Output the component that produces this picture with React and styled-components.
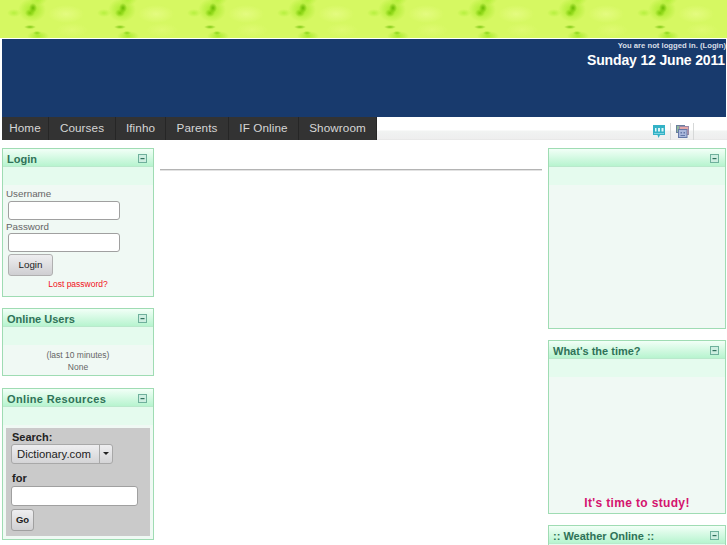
import React from "react";
import styled, { createGlobalStyle } from "styled-components";

const GlobalStyle = createGlobalStyle`
    html, body {
        margin: 0;
        height: 545px;
        overflow: hidden;
        background: #fff;
        font-family: "Liberation Sans", Arial, sans-serif;
    }
`;

const NAV_ITEMS = [
    { label: "Home", width: 47 },
    { label: "Courses", width: 67 },
    { label: "Ifinho", width: 50 },
    { label: "Parents", width: 63 },
    { label: "IF Online", width: 70 },
    { label: "Showroom", width: 78 },
];

function Minus() {
    return (
        <svg width="9" height="9" viewBox="0 0 9 9">
            <rect x="0.5" y="0.5" width="8" height="8" fill="#cdeee0" stroke="#6fb09c" />
            <rect x="2.5" y="4" width="4" height="1.2" fill="#2f6f5c" />
        </svg>
    );
}

function HelpIcon() {
    return (
        <svg width="12" height="13" viewBox="0 0 12 13">
            <path d="M0 0h12v10H7l-1.500 3-1-3H0z" fill="#33b2c6" />
            <rect x="2" y="3" width="1.500" height="3.500" fill="#dff6f8" />
            <rect x="5" y="3" width="2" height="3.500" fill="#dff6f8" />
            <rect x="8.500" y="3" width="2" height="3.500" fill="#dff6f8" />
            <rect x="1" y="8" width="10" height="0.800" fill="#8fdbe6" />
        </svg>
    );
}

function WindowsIcon() {
    return (
        <svg width="13" height="13" viewBox="0 0 13 13">
            <rect x="0.500" y="0.500" width="8" height="7" fill="#8fb89a" stroke="#6b7f9f" />
            <rect x="3.500" y="1.500" width="9" height="8" fill="#e5a7a7" stroke="#9a8aa8" />
            <rect x="2.500" y="4.500" width="8.500" height="8" fill="#aab8dc" stroke="#6478a8" />
            <rect x="4.500" y="7" width="1.500" height="1.500" fill="#6478a8" />
            <rect x="7.500" y="7" width="1.500" height="1.500" fill="#6478a8" />
            <rect x="4.500" y="10" width="4.500" height="1" fill="#6478a8" />
        </svg>
    );
}

function Panel({ title, bodyHeight, spacing, spaceAfter, children }) {
    return (
        <PanelBox $spaceAfter={spaceAfter}>
            <PanelHead>
                <PanelTitle $spacing={spacing}>{title}</PanelTitle>
                <Minus />
            </PanelHead>
            <PanelStrip />
            <PanelBody $height={bodyHeight}>{children}</PanelBody>
        </PanelBox>
    );
}

export default function App() {
    return (
        <Page>
            <GlobalStyle />
            <Banner />
            <Header>
                <LoginNote>You are not logged in. (Login)</LoginNote>
                <DateLine>Sunday 12 June 2011</DateLine>
            </Header>
            <NavBar>
                <NavList>
                    {NAV_ITEMS.map((item) => (
                        <NavItem key={item.label} $width={item.width}>
                            {item.label}
                        </NavItem>
                    ))}
                </NavList>
                <Tools>
                    <ToolCell>
                        <HelpIcon />
                    </ToolCell>
                    <ToolCell>
                        <WindowsIcon />
                    </ToolCell>
                </Tools>
            </NavBar>
            <Columns>
                <LeftColumn>
                    <Panel title="Login" bodyHeight={111}>
                        <LoginForm>
                            <FieldLabel>Username</FieldLabel>
                            <LoginInput $width={112} />
                            <FieldLabel>Password</FieldLabel>
                            <LoginInput $width={112} />
                            <LoginButton>Login</LoginButton>
                            <LostLink>Lost password?</LostLink>
                        </LoginForm>
                    </Panel>
                    <Panel title="Online Users" bodyHeight={30} spaceAfter={1}>
                        <UsersNote>
                            (last 10 minutes)
                            <br />
                            None
                        </UsersNote>
                    </Panel>
                    <Panel title="Online Resources" bodyHeight={114} spacing={0.35}>
                        <SearchBox>
                            <SearchLabel>Search:</SearchLabel>
                            <SelectBox>
                                <SelectText>Dictionary.com</SelectText>
                                <SelectCaret />
                            </SelectBox>
                            <ForLabel>for</ForLabel>
                            <SearchInput $width={127} />
                            <GoButton>Go</GoButton>
                        </SearchBox>
                    </Panel>
                </LeftColumn>
                <Middle>
                    <Rule />
                </Middle>
                <RightColumn>
                    <Panel title="" bodyHeight={143} />
                    <Panel title="What's the time?" bodyHeight={136}>
                        <StudyNote>It's time to study!</StudyNote>
                    </Panel>
                    <Panel title=":: Weather Online ::" bodyHeight={40} />
                </RightColumn>
            </Columns>
        </Page>
    );
}

const Page = styled.div`
    width: 727px;
    height: 545px;
    overflow: hidden;
`;

// one tile of the leaf texture, repeated every 90px
const Banner = styled.div`
    height: 38px;
    background-color: #d6f862;
    background-image:
        radial-gradient(ellipse 4px 5px at 33px 8px, rgba(105, 185, 0, 0.95) 0%, rgba(105, 185, 0, 0) 100%),
        radial-gradient(ellipse 5px 4px at 30px 13px, rgba(120, 200, 5, 0.9) 0%, rgba(120, 200, 5, 0) 100%),
        radial-gradient(ellipse 6px 2px at 30px 27px, rgba(115, 195, 10, 0.9) 0%, rgba(115, 195, 10, 0) 100%),
        radial-gradient(ellipse 4px 2px at 37px 33px, rgba(125, 210, 15, 0.85) 0%, rgba(125, 210, 15, 0) 100%),
        radial-gradient(ellipse 14px 12px at 32px 10px, rgba(160, 232, 35, 0.9) 0%, rgba(160, 232, 35, 0) 100%),
        radial-gradient(ellipse 7px 4px at 14px 13px, rgba(165, 235, 45, 0.65) 0%, rgba(165, 235, 45, 0) 100%),
        radial-gradient(ellipse 11px 5px at 38px 36px, rgba(160, 232, 35, 0.8) 0%, rgba(160, 232, 35, 0) 100%),
        radial-gradient(ellipse 9px 5px at 38px 0, rgba(170, 238, 45, 0.75) 0%, rgba(170, 238, 45, 0) 100%),
        radial-gradient(ellipse 18px 9px at 66px 14px, rgba(232, 252, 135, 0.8) 0%, rgba(232, 252, 135, 0) 100%),
        radial-gradient(ellipse 16px 7px at 72px 30px, rgba(226, 250, 120, 0.7) 0%, rgba(226, 250, 120, 0) 100%);
    background-size: 90px 38px;
`;

const Header = styled.div`
    box-sizing: border-box;
    height: 78px;
    margin: 1px 1px 0 2px;
    padding: 1px 0 0;
    background: #183a6d;
    color: #fff;
    text-align: right;
`;

const LoginNote = styled.div`
    font-size: 7.7px;
    line-height: 11px;
    font-weight: bold;
    color: #d8dee8;
`;

const DateLine = styled.div`
    padding-right: 1px;
    font-size: 14px;
    line-height: 18px;
    font-weight: bold;
    letter-spacing: -0.15px;
`;

const NavBar = styled.div`
    display: flex;
    justify-content: space-between;
    height: 23px;
    margin-left: 2px;
    background: linear-gradient(#fff 0, #fff 13px, #f1f3f2 14px, #eeeeee 22px, #e2e2e2 23px);
`;

const NavList = styled.div`
    display: flex;
`;

const NavItem = styled.div`
    box-sizing: border-box;
    width: ${(props) => props.$width}px;
    background: #333;
    border-right: 1px solid #262626;
    color: #d6d6d6;
    font-size: 11.7px;
    line-height: 22px;
    letter-spacing: 0.1px;
    text-align: center;
`;

const Tools = styled.div`
    display: flex;
    align-items: center;
    margin-right: 33px;
`;

const ToolCell = styled.div`
    display: flex;
    align-items: center;
    justify-content: center;
    box-sizing: border-box;
    width: 23px;
    height: 17px;
    margin-top: 5px;
    border-right: 1px solid #d6d8d8;
`;

const Columns = styled.div`
    display: flex;
    align-items: flex-start;
    padding: 8px 1px 0 2px;
`;

const LeftColumn = styled.div`
    display: flex;
    flex-direction: column;
    gap: 11px;
    flex: 0 0 152px;
`;

const RightColumn = styled(LeftColumn)`
    flex: 0 0 178px;
`;

const Middle = styled.div`
    flex: 1;
    padding: 21px 6px 0;
`;

const Rule = styled.div`
    height: 1px;
    background: #b4b4b4;
    border-bottom: 1px solid #e2e2e2;
`;

const PanelBox = styled.div`
    margin-bottom: ${(props) => props.$spaceAfter || 0}px;
    border: 1px solid #9fdcb3;
    background: #f0f9f4;
`;

const PanelHead = styled.div`
    display: flex;
    align-items: center;
    justify-content: space-between;
    box-sizing: border-box;
    height: 18px;
    padding: 1px 6px 0 4px;
    background: linear-gradient(#f2fff7, #b7f4cf);
    border-bottom: 1px solid #b9e9cc;
`;

const PanelTitle = styled.div`
    padding-top: 2px;
    font-size: 11px;
    line-height: 13px;
    font-weight: bold;
    letter-spacing: ${(props) => props.$spacing || 0}px;
    color: #2f7258;
`;

const PanelStrip = styled.div`
    height: 18px;
    background: #e5fbee;
`;

const PanelBody = styled.div`
    display: flow-root;
    height: ${(props) => props.$height}px;
`;

const LoginForm = styled.div`
    display: flex;
    flex-direction: column;
    align-items: flex-start;
    padding-left: 3px;
`;

const FieldLabel = styled.div`
    font-size: 9.8px;
    line-height: 13px;
    color: #666;
    &:first-child {
        margin: 2px 0 1px;
    }
`;

const TextBox = styled.div`
    box-sizing: border-box;
    width: ${(props) => props.$width}px;
    background: #fff;
    border: 1px solid #a0a0a0;
    border-radius: 3px;
`;

const LoginInput = styled(TextBox)`
    height: 19px;
    margin-left: 2px;
`;

const SearchInput = styled(TextBox)`
    height: 20px;
    margin-top: 1px;
`;

const LoginButton = styled.div`
    box-sizing: border-box;
    width: 45px;
    height: 22px;
    margin: 2px 0 0 2px;
    background: linear-gradient(#eeeef0, #cfcfd2);
    border: 1px solid #b0b0b0;
    border-radius: 3px;
    font-size: 9.8px;
    line-height: 20px;
    text-align: center;
    color: #222;
`;

const LostLink = styled.div`
    align-self: center;
    margin: 3px 3px 0 0;
    font-size: 8.5px;
    line-height: 11px;
    color: #f01020;
`;

const UsersNote = styled.div`
    padding-top: 4px;
    font-size: 8.5px;
    line-height: 12px;
    text-align: center;
    color: #666;
`;

const SearchBox = styled.div`
    box-sizing: border-box;
    height: 108px;
    margin: 3px 3px 0;
    padding: 2px 5px 0;
    background: #cacaca;
`;

const SearchLabel = styled.div`
    padding-left: 1px;
    font-size: 11px;
    line-height: 14px;
    font-weight: bold;
    color: #222;
`;

const SelectBox = styled.div`
    display: flex;
    box-sizing: border-box;
    width: 102px;
    height: 20px;
    background: linear-gradient(#eeeef0, #d4d4d6);
    border: 1px solid #a8a8a8;
    border-radius: 3px;
`;

const SelectText = styled.div`
    flex: 1;
    padding-left: 5px;
    font-size: 11.3px;
    line-height: 18px;
    color: #222;
    border-right: 1px solid #a8a8a8;
`;

const SelectCaret = styled.div`
    flex: 0 0 12px;
    position: relative;
    &::after {
        content: "";
        position: absolute;
        left: 3px;
        top: 7px;
        border-left: 3px solid transparent;
        border-right: 3px solid transparent;
        border-top: 3px solid #222;
    }
`;

const ForLabel = styled(SearchLabel)`
    margin-top: 7px;
`;

const GoButton = styled.div`
    box-sizing: border-box;
    width: 23px;
    height: 22px;
    margin-top: 3px;
    background: linear-gradient(#eeeef0, #d0d0d2);
    border: 1px solid #a0a0a0;
    border-radius: 3px;
    font-size: 9.5px;
    font-weight: bold;
    line-height: 20px;
    text-align: center;
    color: #222;
`;

const StudyNote = styled.div`
    padding-top: 118px;
    font-size: 12px;
    line-height: 16px;
    font-weight: bold;
    letter-spacing: 0.35px;
    text-align: center;
    color: #d4146e;
`;
